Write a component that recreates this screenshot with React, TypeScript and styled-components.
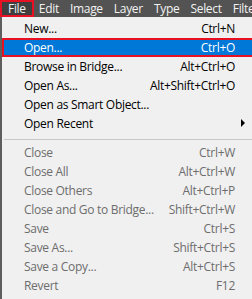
import React from 'react';
import styled, { createGlobalStyle } from 'styled-components';

const GlobalStyle = createGlobalStyle`
	html, body {
		margin: 0;
		padding: 0;
		background: #f0f0f0;
	}
	body {
		font-family: 'Open Sans', 'Noto Sans', sans-serif;
		font-size: 12px;
		letter-spacing: -0.3px;
	}
`;

const MenuBar = styled.div`
	display: flex;
	height: 17px;
	background: #535353;
	color: #f2f2f2;
	white-space: nowrap;
	overflow: hidden;
`;

const BarItem = styled.div<{ $active?: boolean }>`
	display: flex;
	align-items: center;
	box-sizing: border-box;
	height: 17px;
	padding: 0 6px 1px;
	background: ${(p) => (p.$active ? '#3f3f3f' : 'transparent')};
	border: 2px solid ${(p) => (p.$active ? '#e81123' : 'transparent')};
	border-width: ${(p) => (p.$active ? '2px' : '0')};
	padding-left: ${(p) => (p.$active ? '6px' : '5px')};
	padding-right: ${(p) => (p.$active ? '6px' : '6px')};
`;

const Body = styled.div`
	display: flex;
`;

const Edge = styled.div`
	width: 2px;
	background: #5e5e5e;
`;

const Dropdown = styled.div`
	flex: 1;
	background: #f0f0f0;
	padding: 2px 0 4px;
`;

const Item = styled.div<{ $highlight?: boolean; $disabled?: boolean }>`
	display: flex;
	align-items: center;
	justify-content: space-between;
	box-sizing: border-box;
	height: 19px;
	padding: 0 17px 1px 20px;
	white-space: nowrap;
	color: ${(p) => (p.$highlight ? '#ffffff' : p.$disabled ? '#6d6d6d' : '#000000')};
	background: ${(p) => (p.$highlight ? '#0078d7' : 'transparent')};
	border: 2px solid ${(p) => (p.$highlight ? '#e81123' : 'transparent')};
	border-right: none;
`;

const Arrow = styled.span`
	width: 0;
	height: 0;
	margin-right: -10px;
	border-top: 4px solid transparent;
	border-bottom: 4px solid transparent;
	border-left: 4px solid #000;
`;

const Separator = styled.div`
	height: 10px;
	display: flex;
	align-items: center;
	padding-left: 2px;
	&::after {
		content: '';
		flex: 1;
		height: 1px;
		margin-top: 2px;
		background: #c8c8c8;
	}
`;

const barItems = ['File', 'Edit', 'Image', 'Layer', 'Type', 'Select', 'Filter'];

type Entry = { label: string; keys?: string; disabled?: boolean; highlight?: boolean; sub?: boolean } | 'sep';

const entries: Entry[] = [
	{ label: 'New...', keys: 'Ctrl+N' },
	{ label: 'Open...', keys: 'Ctrl+O', highlight: true },
	{ label: 'Browse in Bridge...', keys: 'Alt+Ctrl+O' },
	{ label: 'Open As...', keys: 'Alt+Shift+Ctrl+O' },
	{ label: 'Open as Smart Object...' },
	{ label: 'Open Recent', sub: true },
	'sep',
	{ label: 'Close', keys: 'Ctrl+W', disabled: true },
	{ label: 'Close All', keys: 'Alt+Ctrl+W', disabled: true },
	{ label: 'Close Others', keys: 'Alt+Ctrl+P', disabled: true },
	{ label: 'Close and Go to Bridge...', keys: 'Shift+Ctrl+W', disabled: true },
	{ label: 'Save', keys: 'Ctrl+S', disabled: true },
	{ label: 'Save As...', keys: 'Shift+Ctrl+S', disabled: true },
	{ label: 'Save a Copy...', keys: 'Alt+Ctrl+S', disabled: true },
	{ label: 'Revert', keys: 'F12', disabled: true },
];

export default function App() {
	return (
		<>
			<GlobalStyle />
			<MenuBar>
				{barItems.map((name, i) => (
					<BarItem key={name} $active={i === 0}>
						{name}
					</BarItem>
				))}
			</MenuBar>
			<Body>
				<Edge />
				<Dropdown>
					{entries.map((e, i) =>
						e === 'sep' ? (
							<Separator key={i} />
						) : (
							<Item key={i} $highlight={e.highlight} $disabled={e.disabled}>
								<span>{e.label}</span>
								{e.sub ? <Arrow /> : <span>{e.keys}</span>}
							</Item>
						)
					)}
				</Dropdown>
			</Body>
		</>
	);
}
